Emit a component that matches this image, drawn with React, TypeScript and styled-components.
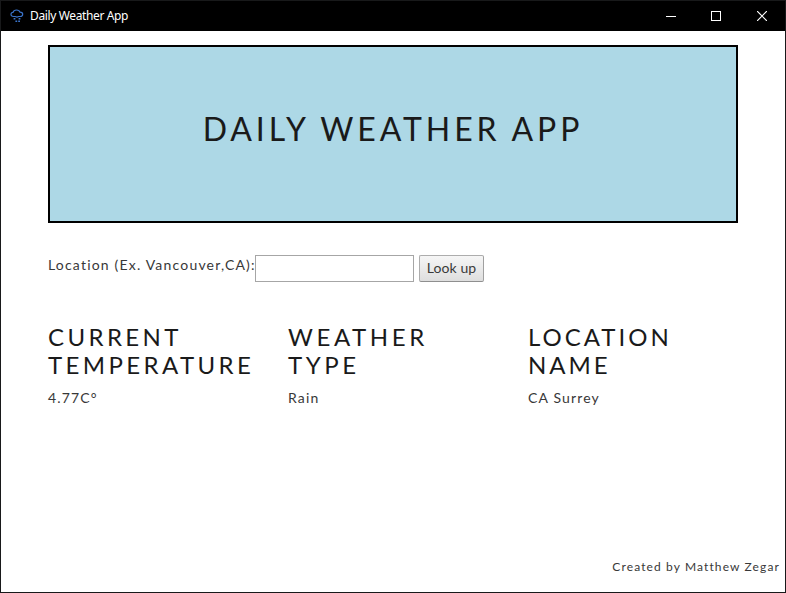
import React from "react";
import styled, { createGlobalStyle } from "styled-components";

const GlobalStyle = createGlobalStyle`
  *, *::before, *::after { box-sizing: border-box; }
  body { margin: 0; background: #fff; overflow: hidden; }
`;

const Window = styled.div`
  display: flex;
  flex-direction: column;
  height: 593px;
  border: 1px solid #18191a;
  background: #fff;
  color: #1a1a1a;
  font-family: Lato, "Open Sans", sans-serif;
`;

const TitleBar = styled.div`
  display: flex;
  align-items: center;
  flex: none;
  height: 30px;
  padding-left: 9px;
  background: #000;
  color: #fff;
`;

const TitleText = styled.span`
  flex: 1;
  margin-left: 6px;
  font: 12px/16px "Noto Sans", "Open Sans", sans-serif;
  letter-spacing: -0.37px;
`;

const Controls = styled.div`
  display: flex;
  height: 100%;
`;

const ControlButton = styled.button<{ $width: number }>`
  display: flex;
  align-items: center;
  justify-content: center;
  width: ${({ $width }) => $width}px;
  padding: 0;
  border: 0;
  background: none;
  color: #fff;
`;

const Content = styled.main`
  display: flex;
  flex-direction: column;
  flex: 1;
  padding: 14px 47px 0;
`;

const Banner = styled.header`
  display: flex;
  align-items: center;
  justify-content: center;
  height: 178px;
  padding-bottom: 10px;
  border: 2px solid #000;
  background: #add8e6;
`;

const Heading = styled.h1`
  margin: 0;
  font-size: 32px;
  font-weight: 400;
  line-height: 40px;
  letter-spacing: 3.9px;
  white-space: nowrap;
`;

const LookupForm = styled.form`
  display: flex;
  align-items: flex-start;
  margin-top: 32px;
`;

const Label = styled.label`
  width: 207px;
  color: #383838;
  font-size: 14px;
  line-height: 19px;
  letter-spacing: 1.19px;
  white-space: nowrap;
`;

const LocationInput = styled.input`
  width: 159px;
  height: 27px;
  padding: 2px;
  border: 1px solid #a6a6a6;
  border-radius: 0;
  background: #fff;
  font: inherit;
  outline: none;
`;

const LookupButton = styled.button`
  width: 65px;
  height: 27px;
  margin-left: 5px;
  padding: 0 0 1px;
  border: 1px solid;
  border-color: #adadad #a0a0a0 #8f8f8f #adadad;
  border-radius: 2px;
  background: linear-gradient(#f6f6f6, #dedede);
  color: #3a3a3a;
  font: 14px/20px Lato, sans-serif;
  letter-spacing: 0.1px;
  white-space: nowrap;
`;

const Results = styled.section`
  display: grid;
  grid-template-columns: repeat(3, 210px);
  column-gap: 30px;
  margin-top: 41px;
`;

const ResultTitle = styled.h2<{ $spacing: number }>`
  margin: 0;
  font-size: 24px;
  font-weight: 400;
  line-height: 28px;
  letter-spacing: ${({ $spacing }) => $spacing}px;
`;

const ResultLine = styled.span`
  display: block;
  white-space: nowrap;
`;

const ResultValue = styled.p`
  margin: 8px 0 0;
  color: #383838;
  font-size: 14px;
  line-height: 21px;
  letter-spacing: 1.15px;
`;

const Footer = styled.footer`
  flex: none;
  padding: 0 5px 15px;
  color: #383838;
  text-align: right;
  font-size: 12px;
  line-height: 20px;
  letter-spacing: 1.12px;
`;

const results = [
  { title: ["CURRENT", "TEMPERATURE"], value: "4.77C°", spacing: 3.4 },
  { title: ["WEATHER", "TYPE"], value: "Rain", spacing: 3.6 },
  { title: ["LOCATION", "NAME"], value: "CA Surrey", spacing: 3 },
];

const RainIcon = () => (
  <svg width="14" height="14" viewBox="0 0 14 14" fill="none" stroke="#3a74cc">
    <path d="M3.5 7.5C1.8 7.5 1 6.6 1 5.4S1.9 3.3 3 3.4C3.5 1.8 4.8 1 6.5 1s3.1.8 3.6 2.2c1.6 0 2.6.8 2.6 2.1s-1 2.2-2.5 2.2H8.7L7 8.1 5.2 7.5z" strokeWidth="1.2" />
    <path d="M8.6 9.8h1.8M3.6 9.8h1.8M5.4 12.2h1.8M8.2 12.2H10" strokeWidth="1.5" />
  </svg>
);

export default function App() {
  return (
    <>
      <GlobalStyle />
      <Window>
        <TitleBar>
          <RainIcon />
          <TitleText>Daily Weather App</TitleText>
          <Controls>
            <ControlButton $width={45} aria-label="Minimize">
              <svg width="11" height="11" shapeRendering="crispEdges"><path d="M1 5.5h10" stroke="currentColor" /></svg>
            </ControlButton>
            <ControlButton $width={46} aria-label="Maximize">
              <svg width="10" height="10" shapeRendering="crispEdges"><path d="M.5.5h9v9h-9z" fill="none" stroke="currentColor" /></svg>
            </ControlButton>
            <ControlButton $width={46} aria-label="Close">
              <svg width="10" height="10"><path d="M0 0l10 10M10 0L0 10" stroke="currentColor" strokeWidth="1.2" /></svg>
            </ControlButton>
          </Controls>
        </TitleBar>
        <Content>
          <Banner>
            <Heading>DAILY WEATHER APP</Heading>
          </Banner>
          <LookupForm onSubmit={(e) => e.preventDefault()}>
            <Label htmlFor="location">Location (Ex. Vancouver,CA):</Label>
            <LocationInput id="location" />
            <LookupButton>Look up</LookupButton>
          </LookupForm>
          <Results>
            {results.map(({ title, value, spacing }) => (
              <article key={value}>
                <ResultTitle $spacing={spacing}>
                  {title.map((line) => (
                    <ResultLine key={line}>{line}</ResultLine>
                  ))}
                </ResultTitle>
                <ResultValue>{value}</ResultValue>
              </article>
            ))}
          </Results>
        </Content>
        <Footer>Created by Matthew Zegar</Footer>
      </Window>
    </>
  );
}
